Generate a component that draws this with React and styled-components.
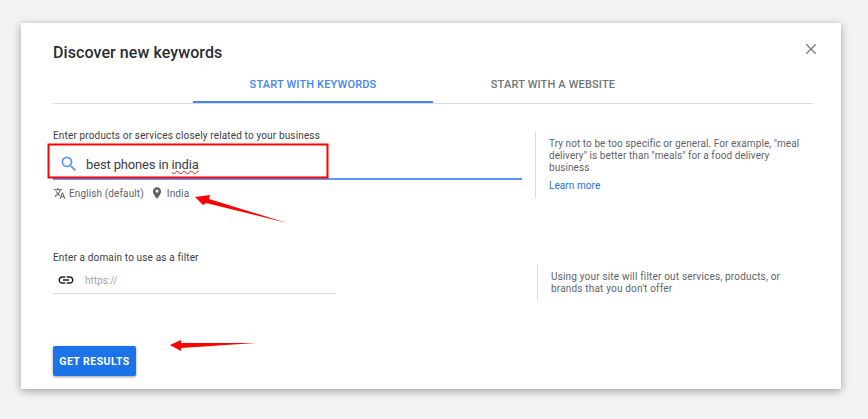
import React from 'react'
import styled, { createGlobalStyle } from 'styled-components'
import { MdClose, MdLink, MdPlace, MdSearch, MdTranslate } from 'react-icons/md'

const GlobalStyle = createGlobalStyle`
  html, body { margin: 0; height: 100%; }
  body {
    background: #f1f3f5;
    font-family: Roboto, "Liberation Sans", sans-serif;
    overflow: hidden;
  }
`
const Page = styled.div`
  position: relative;
  width: 868px;
  height: 419px;
  padding: 23px 27px 0 21px;
  box-sizing: border-box;
`
const Dialog = styled.div`
  position: relative;
  height: 366px;
  padding: 20px 28px 0 32px;
  box-sizing: border-box;
  background: #fff;
  box-shadow: 0 2px 8px rgba(0, 0, 0, 0.35);
`
const Title = styled.h2`
  margin: 0;
  height: 19px;
  font-size: 16px;
  line-height: 19px;
  font-weight: 500;
  letter-spacing: 0.08px;
  color: #2a2d31;
`
const CloseButton = styled.div`
  position: absolute;
  top: 17px;
  right: 21px;
  display: flex;
  color: #80868b;
`
const Tabs = styled.div`
  display: flex;
  margin-top: 9px;
  padding-left: 140px;
  height: 32px;
  border-bottom: 1px solid #dadce0;
`
const Tab = styled.div`
  width: 240px;
  height: 32px;
  box-sizing: border-box;
  text-align: center;
  font-size: 11px;
  line-height: 28px;
  font-weight: 500;
  letter-spacing: 0.16px;
  color: ${props => (props.$active ? '#4285f4' : '#70757a')};
  border-bottom: ${props => (props.$active ? '2px solid #4285f4' : 'none')};
`
const Section = styled.div`
  display: flex;
  align-items: flex-start;
  margin-top: ${props => props.$top}px;
`
const Main = styled.div`
  width: ${props => props.$width}px;
  flex: none;
`
const Label = styled.div`
  font-size: 10px;
  line-height: 12px;
  letter-spacing: 0.15px;
  color: #3c4043;
`
const KeywordInput = styled.div`
  display: flex;
  align-items: center;
  height: 29px;
  margin-top: 7px;
  padding-left: 6px;
  border-bottom: 2px solid #5b95f5;
  color: #5b95f5;
`
const InputText = styled.span`
  margin-left: 7px;
  padding-top: 1px;
  font-size: 13px;
  letter-spacing: -0.15px;
  color: #3c4043;
`
const Misspelled = styled.span`
  text-decoration: underline wavy #f01818 1px;
  text-decoration-skip-ink: none;
  text-underline-offset: 1px;
`
const Options = styled.div`
  display: flex;
  align-items: center;
  margin-top: 5px;
  height: 16px;
  font-size: 10px;
  letter-spacing: 0.12px;
  color: #5f6368;
`
const Option = styled.div`
  display: flex;
  align-items: center;
  gap: ${props => props.$gap}px;
  margin-right: 6px;
  svg { flex: none; }
`
const Hint = styled.div`
  width: ${props => props.$width}px;
  height: ${props => props.$height}px;
  margin: ${props => props.$top}px 0 0 ${props => props.$left}px;
  padding: 7px 0 0 13px;
  box-sizing: border-box;
  border-left: 1px solid #dadce0;
  font-size: 10px;
  line-height: 12px;
  letter-spacing: ${props => props.$spacing}px;
  color: #5f6368;
`
const LearnMore = styled.a`
  display: block;
  margin-top: 6px;
  color: #1a73e8;
`
const DomainInput = styled.div`
  display: flex;
  align-items: center;
  width: 278px;
  height: 26px;
  margin-top: 3px;
  padding-left: 4px;
  border-bottom: 1px solid #dadce0;
  color: #202124;
`
const Placeholder = styled.span`
  margin-left: 10px;
  font-size: 10px;
  letter-spacing: 0;
  color: #a0a4a8;
`
const SubmitButton = styled.button`
  display: block;
  width: 83px;
  height: 30px;
  margin-top: 45px;
  padding: 0;
  border: 0;
  border-radius: 2px;
  background: #1a73e8;
  box-shadow: 0 1px 3px rgba(0, 0, 0, 0.4);
  font-family: inherit;
  font-size: 10.5px;
  font-weight: 700;
  letter-spacing: 0.45px;
  color: #fff;
`
const Annotations = styled.svg`
  position: absolute;
  top: 0;
  left: 0;
  pointer-events: none;
`

const App = () => {
  return (
    <Page>
      <GlobalStyle />
      <Dialog>
        <Title>Discover new keywords</Title>
        <CloseButton>
          <MdClose size={18} />
        </CloseButton>
        <Tabs>
          <Tab $active>START WITH KEYWORDS</Tab>
          <Tab>START WITH A WEBSITE</Tab>
        </Tabs>
        <Section $top={26}>
          <Main $width={469}>
            <Label>Enter products or services closely related to your business</Label>
            <KeywordInput>
              <MdSearch size={20} />
              <InputText>best phones in <Misspelled>india</Misspelled></InputText>
            </KeywordInput>
            <Options>
              <Option $gap={3}><MdTranslate size={13} />English (default)</Option>
              <Option $gap={3}><MdPlace size={14} />India</Option>
            </Options>
          </Main>
          <Hint $width={272} $height={67} $top={1} $left={13} $spacing={0.07}>
            Try not to be too specific or general. For example, "meal delivery" is better than "meals" for a food delivery business
            <LearnMore>Learn more</LearnMore>
          </Hint>
        </Section>
        <Section $top={51}>
          <Main $width={469}>
            <Label>Enter a domain to use as a filter</Label>
            <DomainInput>
              <MdLink size={18} />
              <Placeholder>https://</Placeholder>
            </DomainInput>
          </Main>
          <Hint $width={276} $height={37} $top={12} $left={15} $spacing={0.18}>
            Using your site will filter out services, products, or brands that you don't offer
          </Hint>
        </Section>
        <SubmitButton>GET RESULTS</SubmitButton>
      </Dialog>
      <Annotations width="868" height="419" viewBox="0 0 868 419">
        <rect x="48.5" y="144.5" width="279" height="33" fill="none" stroke="#f00" strokeWidth="2" />
        <path d="M195 197 L210 195 L209 199 L287 223 L206 203 L203 205 Z" fill="#f00" />
        <path d="M170 345 L181 340 L181 343 L257 343 L181 348 L181 351 Z" fill="#f00" />
      </Annotations>
    </Page>
  )
}

export default App
